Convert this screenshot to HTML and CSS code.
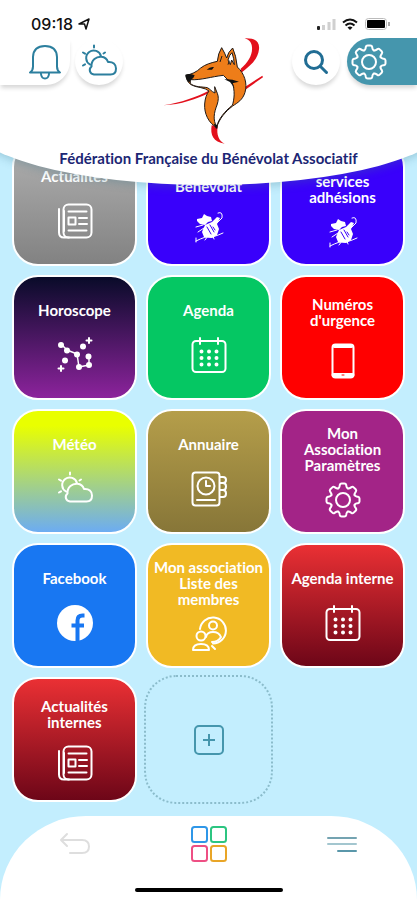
FILE: index.html
```html
<!DOCTYPE html>
<html lang="fr">
<head>
<meta charset="utf-8">
<meta name="viewport" content="width=device-width, initial-scale=1">
<title>Fédération Française du Bénévolat Associatif</title>
<link rel="stylesheet" href="styles.css">
</head>
<body>
<svg class="defs" aria-hidden="true">
  <symbol id="weather" viewBox="0 0 36 36">
    <path d="M9 20.5A7.5 7.5 0 1 1 20 12.3M13 30.5C8.5 30 7.5 25 10.5 22.5C10 16 15.5 12.3 20.5 12.8C24 13.2 26 15 27 18C32 17.5 35 20.5 35 24.500C35 28 33 30.5 29.5 30.5Z"/>
    <path d="M13 1.500v2M2 8.500l2 1.200M2 21.500l2-1.200M24 8.500l-1.500 1"/>
  </symbol>
  <symbol id="gear" viewBox="-18 -18 36 36">
    <g id="quarter">
      <path id="cog" d="M-4.800-11.600C-3.400-12.200-3.500-13.200-3.200-15Q-2.900-16.500-1.400-16.500H1.400Q2.900-16.500 3.200-15C3.500-13.200 3.400-12.200 4.800-11.600"/>
      <use href="#cog" transform="rotate(45)"/>
    </g>
    <use href="#quarter" transform="rotate(90)"/>
    <use href="#quarter" transform="rotate(180)"/>
    <use href="#quarter" transform="rotate(270)"/>
    <circle r="7"/>
  </symbol>
  <symbol id="news" viewBox="0 0 36 36">
    <rect x="6.500" y="1.500" width="28" height="33" rx="5"/>
    <path d="M2 6v23.500q0 5 5 5h5M7 28V8"/>
    <path d="M11.500 8.500h18M11.500 27.500h18M22 15h8M22 21h8M11.500 14.500h7v7h-7z"/>
  </symbol>
  <symbol id="calendar" viewBox="0 0 36 36">
    <rect x="1.500" y="4" width="33" height="31" rx="3.500"/>
    <path d="M9 1v6M27 1v6"/>
    <path stroke-width="4" d="M10.500 14.500h.01M18 14.500h.01M25.500 14.500h.01M10.500 21h.01M18 21h.01M25.500 21h.01M10.500 27.500h.01M18 27.500h.01M25.500 27.500h.01"/>
  </symbol>
  <symbol id="mascot" viewBox="0 0 36 36">
    <g fill="currentColor" stroke="none">
      <path d="M6 10l5-1 2-4 3 2 4 1 1 4-4 1-3 3-5-1-3-3zM14 16l7-3 5-5 3 1-3 6 2 5-2 6-5 3-8-1-2-5z"/>
    </g>
    <path stroke-width="1" d="M27 4q5-2 4 5l-5 5M12 16l-7 2M13 19l-6 4M5 32q10-5 13-4t14-4M17 27l-3 4M22 27l1 3M5 29v4"/>
    <path class="cut" d="M16 18l4 7M19 16l4 7M22 18l2 3"/>
  </symbol>
</svg>

<div class="app">
  <header class="top">
    <div class="status">
      <span class="clock">09:18
        <svg width="12" height="12" viewBox="0 0 12 12"><path d="M1 6L11 1L8 11L6.500 6Z" fill="none" stroke="#111" stroke-width="1.500" stroke-linejoin="round"/></svg>
      </span>
      <svg width="76" height="14" viewBox="0 0 76 14">
        <rect x="1" y="9" width="3" height="4" rx="1" fill="#222"/>
        <path d="M7.500 13V8M13 13V5M18 13V2" stroke="#d0d0d0" stroke-width="3"/>
        <g fill="none" stroke="#111" stroke-width="2"><path d="M27 5.500q7-6 14 0M29.500 8.500q4.500-4 9 0"/></g>
        <path d="M31.500 10.500q2.500-2 5 0L34 13z" fill="#111"/>
        <rect x="49.500" y="1.500" width="21" height="11" rx="3" fill="#fff" stroke="#bbb"/><rect x="51" y="3" width="18" height="8" rx="1" fill="#000"/><path d="M73 5v4" stroke="#aaa" stroke-width="2"/>
      </svg>
    </div>
    <div class="bar">
      <div class="group">
        <button class="tab" aria-label="Notifications"><svg class="icon" viewBox="0 0 36 36"><path d="M3 28.500q3-2 3-6V13Q6.500 2 18 2T30 13v9.500q0 4 3 6zM14 30q.5 4.500 4 4.500t4-4.500"/></svg></button>
        <button class="round" aria-label="Météo"><svg class="icon"><use href="#weather"/></svg></button>
      </div>
      <svg class="logo" viewBox="4 24 336 321" role="img" aria-label="Renard">
        <g fill="#e3101c">
          <path d="M282 25C310 24 328 32 325 58C322 90 295 110 272 128L270 116C292 98 306 75 304 52C303 38 298 31 282 25Z"/>
          <path d="M38 226C90 218 140 200 174 182L174 189C140 206 90 224 38 226ZM284 170L335 137L337 142L284 179Z"/>
          <path d="M183 286C178 315 188 337 222 341C204 332 197 315 201 288Z"/>
        </g>
        <g stroke="#201a18" stroke-width="3" stroke-linejoin="round">
          <path fill="#ee7d19" d="M106 136C122 133 138 126 150 114C164 103 182 98 200 94Q202 70 213 53Q223 70 228 84Q232 66 246 54Q256 75 260 111C281 130 291 160 283 187C276 210 261 218 246 228C224 245 206 266 198 292C174 280 160 250 162 222C163 205 168 192 175 183C162 172 140 173 125 166C112 160 108 150 106 136Z"/>
          <path fill="#fff" d="M119 149C150 151 182 140 218 136L232 150L243 154C255 180 250 212 245 226C222 244 204 266 198 290C186 270 190 248 199 225C204 210 204 200 200 190L192 170L193 189C182 185 179 177 170 173C155 170 130 172 119 160Z"/>
          <path fill="#fff" d="M232 90Q236 74 244 68Q250 84 251 104L243 90L239 104Z"/>
        </g>
        <path fill="#111" d="M104 134Q118 129 132 136Q130 145 120 150L116 158Q105 150 104 134ZM168 119Q178 109 190 111L184 119ZM221 148Q240 146 265 155L245 160L252 174Q242 162 238 156ZM189 281L199 285L201 295L196 296Z"/>
        <path fill="none" stroke="#201a18" stroke-width="3" d="M208 96l6-18M236 92l-4 12"/>
      </svg>
      <div class="group right">
        <button class="round" aria-label="Rechercher"><svg class="icon search" viewBox="0 0 36 36"><circle cx="16" cy="16" r="8.500"/><path d="M22.500 22.500l6 6"/></svg></button>
        <button class="tab teal" aria-label="Paramètres"><svg class="icon"><use href="#gear"/></svg></button>
      </div>
    </div>
    <h1>Fédération Française du Bénévolat Associatif</h1>
  </header>

  <main class="tiles">
    <a href="#" class="tile gray"><span>Actualités</span><svg class="icon"><use href="#news"/></svg></a>
    <a href="#" class="tile blue"><span>&nbsp;<br>Bénévolat</span><svg class="icon"><use href="#mascot"/></svg></a>
    <a href="#" class="tile blue"><span>&nbsp;<br>services<br>adhésions</span><svg class="icon"><use href="#mascot"/></svg></a>

    <a href="#" class="tile night"><span>Horoscope</span><svg class="icon" viewBox="0 0 36 36"><path stroke-width="1.500" d="M4 7l6 6 10 4 2 13 10-2V19"/><path stroke-width="6" d="M4 8h.01M10 13.500h.01M20 17.500h.01M22 30h.01M32 28h.01M31.500 19.500h.01M26 9.500h.01M8 23.500h.01"/><path d="M32 1v5M29.500 3.500h5M4 29v5M1.500 31.500h5"/></svg></a>
    <a href="#" class="tile green"><span>Agenda</span><svg class="icon"><use href="#calendar"/></svg></a>
    <a href="#" class="tile red"><span>Numéros<br>d'urgence</span><svg class="icon" viewBox="0 0 36 36"><rect x="7.500" y="1.500" width="21" height="33" rx="3"/><path stroke-width="4" d="M8.500 32h19M9.500 3h17"/><path stroke="#f00" stroke-width="1" d="M17 32h2"/></svg></a>

    <a href="#" class="tile sky"><span>Météo</span><svg class="icon"><use href="#weather"/></svg></a>
    <a href="#" class="tile olive"><span>Annuaire</span><svg class="icon" viewBox="0 0 36 36"><rect x="1.500" y="1.500" width="27" height="33" rx="3"/><circle cx="15" cy="15" r="8.500"/><path d="M15 10v5h4M6 29h18M29 6h3q3 0 3 3t-3 3h-3M29 12h3q3 0 3 3.500t-3 3.500h-3M29 19h3q3 0 3 3.500t-3 3.500h-3"/></svg></a>
    <a href="#" class="tile purple"><span>Mon<br>Association<br>Paramètres</span><svg class="icon"><use href="#gear"/></svg></a>

    <a href="#" class="tile facebook"><span>Facebook</span><svg class="icon" viewBox="0 0 36 36"><circle cx="18" cy="18" r="18" fill="#fff" stroke="none"/><path stroke="#1877f2" stroke-width="4" stroke-linecap="butt" d="M20.500 36V15.500q0-5 5-5h2M14.500 20.500h12.500"/></svg></a>
    <a href="#" class="tile yellow"><span>Mon association<br>Liste des<br>membres</span><svg class="icon" viewBox="0 0 36 36"><path d="M9 13A13 13 0 1 1 22 27.500"/><circle cx="22" cy="9.500" r="4"/><path d="M15 21q1-5 7-5t8 5q-3 5-9 5"/><circle cx="10" cy="20" r="4.500"/><path d="M2 34q0-6 8-6t8 6zM21 30l3 3"/></svg></a>
    <a href="#" class="tile crimson"><span>Agenda interne</span><svg class="icon"><use href="#calendar"/></svg></a>

    <a href="#" class="tile crimson"><span>Actualités<br>internes</span><svg class="icon"><use href="#news"/></svg></a>
    <button class="add" aria-label="Ajouter"><svg width="30" height="30" viewBox="0 0 30 30"><rect x="1" y="1" width="28" height="28" rx="4"/><path d="M15 9v12M9 15h12"/></svg></button>
  </main>

  <footer class="bottom">
    <nav>
      <button aria-label="Retour"><svg width="32" height="36" viewBox="0 0 32 36" stroke="#dedede"><path d="M8 8L2 14l6 6M2 14h21q7 0 7 6.500T23 27H11"/></svg></button>
      <button aria-label="Accueil"><svg width="36" height="36" viewBox="0 0 36 36"><rect x="1" y="1" width="15" height="15" rx="2.500" stroke="#2f97e8"/><rect x="20" y="1" width="15" height="15" rx="2.500" stroke="#2cc581"/><rect x="1" y="20" width="15" height="15" rx="2.500" stroke="#ee4f84"/><rect x="20" y="20" width="15" height="15" rx="2.500" stroke="#e9a527"/></svg></button>
      <button aria-label="Menu"><svg width="32" height="36" viewBox="0 0 32 36"><path stroke="#74a3b1" d="M2 12h28"/><path stroke="#a3c6cf" d="M2 18h28"/><path stroke="#5a97aa" d="M12 25h18"/></svg></button>
    </nav>
    <div class="home"></div>
  </footer>
</div>
</body>
</html>
```
FILE: styles.css
```css
* { box-sizing: border-box; }

body {
  margin: 0;
  background: #c3eefe;
  font-family: "Century Gothic", Lato, "Open Sans", sans-serif;
  font-variant-ligatures: none;
}

button {
  border: 0;
  padding: 0;
  background: none;
  font: inherit;
}

svg { display: block; }

.defs {
  position: absolute;
  width: 0;
  height: 0;
}

.app {
  display: flex;
  flex-direction: column;
  min-height: 100vh;
  overflow: hidden;
}

.icon {
  width: 36px;
  height: 36px;
  flex: none;
  fill: none;
  stroke: currentColor;
  stroke-width: 2;
  stroke-linecap: round;
  stroke-linejoin: round;
}

/* Header */
.top {
  position: relative;
  z-index: 1;
  height: 185px;
}

.top::before {
  content: "";
  position: absolute;
  z-index: -1;
  inset: 0 -32px;
  background: #fff;
  border-radius: 0 0 50% 50% / 0 0 65px 65px;
  box-shadow: 0 3px 8px rgba(60, 120, 140, 0.3);
}

.status {
  display: flex;
  justify-content: space-between;
  align-items: center;
  height: 38px;
  padding: 10px 25px 0 31px;
}

.clock {
  display: flex;
  align-items: center;
  gap: 5px;
  font: 500 16px/20px Inter, sans-serif;
  color: #111;
}

.bar {
  display: flex;
  justify-content: space-between;
  align-items: flex-start;
}

.group {
  display: flex;
  gap: 5px;
  color: #2c7f9e;
}

.right { gap: 7px; }

.tab,
.round {
  display: flex;
  align-items: center;
  justify-content: center;
  height: 47px;
  background: #fff;
  color: inherit;
  box-shadow: 0 4px 4px -1px rgba(0, 0, 0, 0.16);
}

.round {
  width: 48px;
  border-radius: 50%;
}

.tab {
  width: 70px;
  padding-left: 20px;
  border-radius: 0 0 24px 0;
}

.teal {
  justify-content: flex-start;
  padding-left: 4px;
  border-radius: 24px 0 0 24px;
  background: #4596ad;
  color: #fff;
}

.search {
  color: #216d94;
  stroke-width: 3;
}

.logo {
  width: 112px;
  height: 107px;
}

h1 {
  margin: 4px 0 0;
  font-size: 15px;
  line-height: 18px;
  font-weight: 700;
  text-align: center;
  color: #1c2674;
}

/* Tiles */
.tiles {
  display: grid;
  grid-template-columns: repeat(3, 1fr);
  gap: 9px;
  margin-top: -44px;
  padding: 0 12px 14px;
}

.tile {
  display: flex;
  flex-direction: column;
  align-items: center;
  justify-content: space-evenly;
  height: 125px;
  padding: 5px 0;
  border: 2px solid #fff;
  border-radius: 26px;
  color: #fff;
  font-size: 15px;
  line-height: 16px;
  font-weight: 700;
  text-align: center;
  text-decoration: none;
  white-space: nowrap;
}

.gray { background: linear-gradient(#b0b0b0, #828282); }
.blue { background: #3900fb; }
.night { background: linear-gradient(#090b29, #8c239c); }
.green { background: #05c763; }
.red { background: #f00; }
.sky { background: linear-gradient(#e9ff00 12%, #6cacf2); }
.olive { background: linear-gradient(#b59e4a, #877638); }
.purple { background: #a32487; }
.facebook { background: #1877f2; }
.yellow { background: #f1ba24; }
.crimson { background: linear-gradient(#ea3034, #6d0618); }

.cut {
  stroke: #3900fb;
  stroke-width: 1;
}

.add {
  display: flex;
  align-items: center;
  justify-content: center;
  margin: -2px;
  border: 2px dotted #8bbccb;
  border-radius: 32px;
}

.add svg {
  fill: none;
  stroke: #4596ad;
  stroke-width: 2;
}

/* Bottom navigation */
.bottom {
  margin-top: auto;
  height: 84px;
  padding-top: 10px;
  background: #fff;
  border-radius: 86px 86px 0 0 / 84px 84px 0 0;
}

nav {
  display: flex;
  justify-content: space-between;
  padding: 0 59px;
}

nav svg {
  fill: none;
  stroke-width: 2;
  stroke-linecap: round;
  stroke-linejoin: round;
}

.home {
  width: 148px;
  height: 4px;
  margin: 26px auto 0;
  border-radius: 2px;
  background: #000;
}
```
